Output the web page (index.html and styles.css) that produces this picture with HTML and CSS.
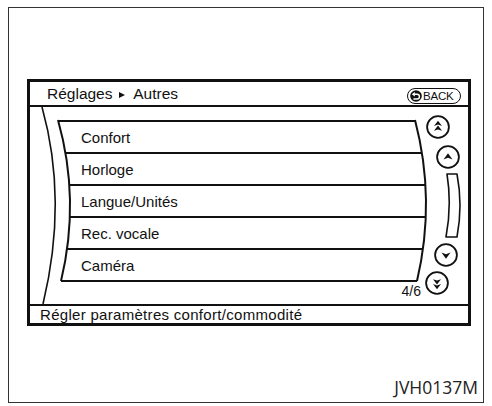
FILE: index.html
```html
<!DOCTYPE html>
<html lang="fr">
<head>
<meta charset="utf-8">
<title>Réglages - Autres</title>
<link rel="stylesheet" href="styles.css">
</head>
<body>
<div class="frame">
  <div class="screen">
    <div class="header">
      <div class="crumb">Réglages <span class="tri"></span> Autres</div>
      <div class="back">
        <svg class="back-icon" viewBox="0 0 12 12" width="12" height="12">
          <circle cx="6" cy="6" r="5.8" fill="#111"/>
          <path d="M1.8 4.3 L4.9 2 L4.9 6.6 Z" fill="#fff"/>
          <path d="M4.4 4.3 H7.1 A2.35 2.35 0 0 1 7.1 9 H3.4" fill="none" stroke="#fff" stroke-width="1.4"/>
        </svg>
        <span>BACK</span>
      </div>
    </div>
    <div class="middle">
      <svg class="curves" width="438" height="197" viewBox="0 0 438 197">
        <path d="M12 0 Q38 93 13 197" fill="none" stroke="#111" stroke-width="1.6"/>
        <path d="M28 13 Q50.5 93 31 174" fill="none" stroke="#111" stroke-width="2"/>
        <path d="M385 13 Q406 93 387 174" fill="none" stroke="#111" stroke-width="2"/>
      </svg>
      <div class="list-col">
        <div class="row row-first" style="--l:28px;--r:8px">Confort</div>
        <div class="row" style="--l:35px;--r:1px">Horloge</div>
        <div class="row" style="--l:39px;--r:-2px">Langue/Unités</div>
        <div class="row" style="--l:40px;--r:-3px">Rec. vocale</div>
        <div class="row" style="--l:37px;--r:0px">Caméra</div>
        <div class="row-end" style="--l:31px;--r:6px"></div>
        <div class="page">4/6</div>
      </div>
      <div class="ctrl-col">
        <svg class="btn b-dup" viewBox="0 0 24 24">
          <circle cx="12" cy="12" r="10.9" fill="none" stroke="#111" stroke-width="1.8"/>
          <path d="M12 5.8 L16 11 L12 9.6 L8 11 Z" fill="#111"/>
          <path d="M12 10.6 L16 15.8 L12 14.4 L8 15.8 Z" fill="#111"/>
        </svg>
        <svg class="btn b-up" viewBox="0 0 24 24">
          <circle cx="12" cy="12" r="10.9" fill="none" stroke="#111" stroke-width="1.8"/>
          <path d="M12 8.3 L16.5 14.6 L12 12.8 L7.5 14.6 Z" fill="#111"/>
        </svg>
        <svg class="bar" viewBox="0 0 18 68" width="18" height="68">
          <path d="M3 2 L13 2 Q19 33 13 65 L2 65 Q8 33 3 2 Z" fill="none" stroke="#111" stroke-width="1.6" stroke-linejoin="round"/>
        </svg>
        <svg class="btn b-down" viewBox="0 0 24 24">
          <circle cx="12" cy="12" r="10.9" fill="none" stroke="#111" stroke-width="1.8"/>
          <path d="M12 15.7 L16.5 9.4 L12 11.2 L7.5 9.4 Z" fill="#111"/>
        </svg>
        <svg class="btn b-ddown" viewBox="0 0 24 24">
          <circle cx="12" cy="12" r="10.9" fill="none" stroke="#111" stroke-width="1.8"/>
          <path d="M12 13.4 L16 8.2 L12 9.6 L8 8.2 Z" fill="#111"/>
          <path d="M12 18.2 L16 13 L12 14.4 L8 13 Z" fill="#111"/>
        </svg>
      </div>
    </div>
    <div class="footer">Régler paramètres confort/commodité</div>
  </div>
  <div class="code">JVH0137M</div>
</div>
</body>
</html>
```

FILE: styles.css
```css
body {
  margin: 0;
  background: #fff;
  font-family: "Liberation Sans", Arial, sans-serif;
  color: #111;
}

.frame {
  box-sizing: border-box;
  width: 476px;
  height: 396px;
  margin: 7px 0 0 8px;
  border: 1px solid #333;
  padding: 71px 5px 6px 18px;
  display: flex;
  flex-direction: column;
}

.screen {
  box-sizing: border-box;
  width: 444px;
  height: 247px;
  border: 3px solid #111;
  display: flex;
  flex-direction: column;
}

.header {
  box-sizing: border-box;
  height: 25px;
  border-bottom: 2px solid #111;
  display: flex;
  align-items: center;
  justify-content: space-between;
  padding: 1px 7px 0 17px;
}

.crumb {
  font-size: 15.5px;
  white-space: nowrap;
}

.tri {
  display: inline-block;
  width: 0;
  height: 0;
  border-left: 6px solid #111;
  border-top: 3.5px solid transparent;
  border-bottom: 3.5px solid transparent;
  margin: 0 5px 1px 2px;
}

.back {
  box-sizing: border-box;
  width: 54px;
  height: 16px;
  margin-top: 3px;
  border: 1.5px solid #111;
  border-radius: 8px;
  display: flex;
  align-items: center;
  padding-left: 2px;
  gap: 1px;
  font-size: 11.5px;
  letter-spacing: -0.2px;
}

.back-icon {
  display: block;
  flex: none;
}

.middle {
  position: relative;
  height: 197px;
  display: flex;
}

.curves {
  position: absolute;
  left: 0;
  top: 0;
  overflow: visible;
  pointer-events: none;
}

.list-col {
  box-sizing: border-box;
  width: 393px;
  padding-top: 13px;
}

.row {
  box-sizing: border-box;
  height: 32px;
  border-top: 2px solid #111;
  margin-left: var(--l);
  margin-right: var(--r);
  padding-left: calc(51px - var(--l));
  display: flex;
  align-items: center;
  font-size: 15px;
}

.row-end {
  border-top: 2px solid #111;
  margin-left: var(--l);
  margin-right: var(--r);
}

.page {
  text-align: right;
  padding-right: 2px;
  font-size: 14px;
  line-height: 16px;
  margin-top: 1px;
}

.ctrl-col {
  width: 45px;
  display: flex;
  flex-direction: column;
}

.btn {
  display: block;
  width: 24px;
  height: 24px;
  flex: none;
}

.bar {
  display: block;
  flex: none;
  margin: 3px 0 0 21px;
}

.b-dup { margin: 8px 0 0 3px; }
.b-up { margin: 6px 0 0 13px; }
.b-down { margin: 3px 0 0 11px; }
.b-ddown { margin: 4px 0 0 2px; }

.footer {
  box-sizing: border-box;
  flex: 1;
  border-top: 2px solid #111;
  padding-left: 10px;
  font-size: 15px;
  letter-spacing: 0.3px;
  display: flex;
  align-items: center;
  white-space: nowrap;
}

.code {
  margin-top: auto;
  align-self: flex-end;
  font-family: "Open Sans", "DejaVu Sans", sans-serif;
  font-size: 17.5px;
  line-height: 1;
  color: #222;
}
```
